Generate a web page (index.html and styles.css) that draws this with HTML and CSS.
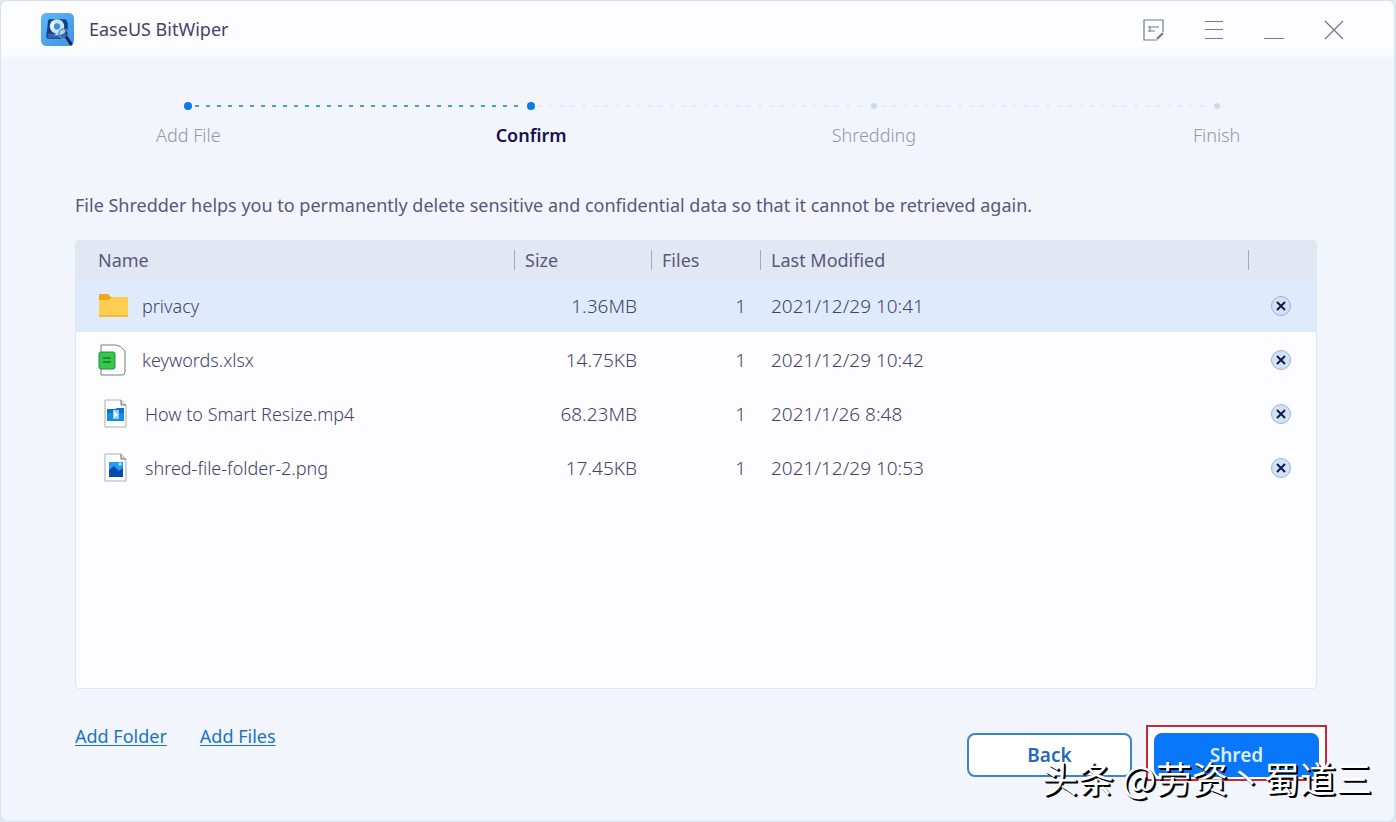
FILE: index.html
```html
<!DOCTYPE html>
<html lang="en">
<head>
<meta charset="UTF-8" />
<meta name="viewport" content="width=device-width, initial-scale=1" />
<title>EaseUS BitWiper</title>
<link rel="stylesheet" href="styles.css">
</head>
<body>
  <div class="window">
    <header class="titlebar">
      <svg class="logo" viewBox="0 0 32 32" aria-hidden="true">
        <defs>
          <linearGradient id="logo-bg" x1="0" y1="0" x2="1" y2="1">
            <stop offset="0" stop-color="#5db9f5" />
            <stop offset="1" stop-color="#3d92ea" />
          </linearGradient>
        </defs>
        <rect width="32" height="32" rx="5" fill="url(#logo-bg)" />
        <path d="M8 6h16l2 4v13l-2 2H6l-1-2 2-16z" fill="#173f87" />
        <path d="M7 20l17-1 1 5H6z" fill="#3268ae" />
        <circle cx="15.500" cy="13" r="7" fill="#c5e6ff" />
        <path d="M10 16a6 6 0 0 1 2-8l3 5z" fill="#f4fbff" />
        <circle cx="15.500" cy="13" r="3" fill="#3c8fdf" />
        <path d="M13 22c2-4 6-4 8-7l3 3c-3 4-7 3-11 4z" fill="#b5d5ee" />
        <circle cx="22" cy="20" r="4.500" fill="none" stroke="#6593bf" stroke-width="1.500" />
        <path d="M25 24l4 6" stroke="#17214f" stroke-width="3" stroke-linecap="round" />
      </svg>
      <h1 class="app-name">EaseUS BitWiper</h1>
      <div class="window-controls">
        <button type="button" class="control" aria-label="Feedback">
          <svg viewBox="0 0 22 22">
            <path d="M14 21H1V1h19v12" />
            <path d="M14 20l6-6" stroke-width="2.200" />
            <path d="M5 8h2m1 0h8M5 12h2m1 0h4M7 7v6" />
          </svg>
        </button>
        <button type="button" class="control" aria-label="Menu">
          <svg viewBox="0 0 22 22"><path d="M2 2.500h18M2 10.500h18M2 19.500h18" /></svg>
        </button>
        <button type="button" class="control" aria-label="Minimize">
          <svg viewBox="0 0 22 22"><path d="M1 19.500h20" /></svg>
        </button>
        <button type="button" class="control" aria-label="Close">
          <svg viewBox="0 0 22 22"><path d="M2 2l18 18M20 2L2 20" /></svg>
        </button>
      </div>
    </header>

    <nav class="steps" aria-label="Progress">
      <div class="track">
        <span class="dot done"></span>
        <span class="line done"></span>
        <span class="dot done"></span>
        <span class="line"></span>
        <span class="dot"></span>
        <span class="line"></span>
        <span class="dot"></span>
      </div>
      <ol class="step-labels">
        <li>Add File</li>
        <li class="current" aria-current="step">Confirm</li>
        <li>Shredding</li>
        <li>Finish</li>
      </ol>
    </nav>

    <main class="content">
      <p class="description">File Shredder helps you to permanently delete sensitive and confidential data so that it cannot be retrieved again.</p>

      <div class="file-list">
        <table>
          <colgroup>
            <col class="col-name">
            <col class="col-size">
            <col class="col-files">
            <col class="col-date">
            <col class="col-remove">
          </colgroup>
          <thead>
            <tr>
              <th scope="col"><span class="name">Name</span></th>
              <th scope="col"><span>Size</span></th>
              <th scope="col"><span>Files</span></th>
              <th scope="col"><span>Last Modified</span></th>
              <th scope="col" aria-label="Remove"><span>&nbsp;</span></th>
            </tr>
          </thead>
          <tbody>
            <tr class="selected">
              <td>
                <div class="file">
                  <svg class="icon" viewBox="0 0 32 32" aria-hidden="true">
                    <path d="M1 5q0-1 1-1h8l3 3h16q1 0 1 1v4H1z" fill="#eda918" />
                    <path d="M1 10h10l3-3h15q1 0 1 1v18q0 1-1 1H2q-1 0-1-1z" fill="#ffcd51" />
                    <path d="M1 25h29v1q0 1-1 1H2q-1 0-1-1z" fill="#f4b936" />
                  </svg>
                  privacy
                </div>
              </td>
              <td class="num">1.36MB</td>
              <td class="num">1</td>
              <td class="date">2021/12/29 10:41</td>
              <td><button type="button" class="remove" aria-label="Remove privacy"><svg viewBox="0 0 18 18"><path d="M5 5l8 8M13 5l-8 8" /></svg></button></td>
            </tr>
            <tr class="tall">
              <td>
                <div class="file">
                  <svg class="icon" viewBox="0 0 32 32" aria-hidden="true">
                    <path d="M3 1h15q4 0 9 6v21q0 3-3 3H3z" fill="#fff" stroke="#777b8d" />
                    <rect x="1" y="8" width="16" height="17" rx="2" fill="#35c64b" stroke="#1c9430" />
                    <path d="M5 14h8M5 18h8" stroke="#147e2a" stroke-width="1.500" />
                  </svg>
                  keywords.xlsx
                </div>
              </td>
              <td class="num">14.75KB</td>
              <td class="num">1</td>
              <td class="date">2021/12/29 10:42</td>
              <td><button type="button" class="remove" aria-label="Remove keywords.xlsx"><svg viewBox="0 0 18 18"><path d="M5 5l8 8M13 5l-8 8" /></svg></button></td>
            </tr>
            <tr>
              <td>
                <div class="file media">
                  <svg class="icon" viewBox="0 0 32 32" aria-hidden="true">
                    <path d="M7 2h16l5 5v22H7z" fill="#fff" stroke="#a6adb9" />
                    <path d="M23 2v5h5" fill="#dce0e7" stroke="#686e7c" />
                    <path d="M9 11h8l2-1h7v13H9z" fill="#0b74d3" />
                    <path d="M9 15h17v8H9z" fill="#168ce9" />
                    <path d="M15 12h6v9h-6z" fill="#8dd2ff" />
                    <path d="M16 13l4 4-4 3z" fill="#fff" />
                  </svg>
                  How to Smart Resize.mp4
                </div>
              </td>
              <td class="num">68.23MB</td>
              <td class="num">1</td>
              <td class="date">2021/1/26 8:48</td>
              <td><button type="button" class="remove" aria-label="Remove How to Smart Resize.mp4"><svg viewBox="0 0 18 18"><path d="M5 5l8 8M13 5l-8 8" /></svg></button></td>
            </tr>
            <tr class="tall">
              <td>
                <div class="file media">
                  <svg class="icon" viewBox="0 0 32 32" aria-hidden="true">
                    <path d="M7 2h16l5 5v22H7z" fill="#fff" stroke="#a6adb9" />
                    <path d="M23 2v5h5" fill="#dce0e7" stroke="#686e7c" />
                    <path d="M11 10h14v15H11z" fill="#269cf0" />
                    <path d="M11 18l5-4 5 5 4-3v9H11z" fill="#064baf" />
                    <circle cx="22" cy="12" r="1.500" fill="#c6eaff" />
                  </svg>
                  shred-file-folder-2.png
                </div>
              </td>
              <td class="num">17.45KB</td>
              <td class="num">1</td>
              <td class="date">2021/12/29 10:53</td>
              <td><button type="button" class="remove" aria-label="Remove shred-file-folder-2.png"><svg viewBox="0 0 18 18"><path d="M5 5l8 8M13 5l-8 8" /></svg></button></td>
            </tr>
          </tbody>
        </table>
      </div>
    </main>

    <footer class="footer">
      <div class="links">
        <a href="#">Add Folder</a>
        <a href="#">Add Files</a>
      </div>
      <div class="actions">
        <button type="button" class="btn back">Back</button>
        <div class="highlight">
          <button type="button" class="btn shred">Shred</button>
        </div>
      </div>
    </footer>
    <div class="watermark" lang="zh-CN">头条 @劳资丶蜀道三</div>
  </div>
</body>
</html>
```
FILE: styles.css
```css
* {
  box-sizing: border-box;
}

body {
  margin: 0;
  background: #dfe9ed;
  font-family: "Noto Sans", "Noto Sans CJK SC", sans-serif;
  font-size: 18px;
  font-weight: 300;
  color: #454269;
}

button {
  font-family: inherit;
  cursor: pointer;
}

.window {
  position: relative;
  display: flex;
  flex-direction: column;
  min-height: 100vh;
  background: #f2f5fc;
  border: 1px solid #d5e4ed;
  border-right-width: 2px;
  border-radius: 8px;
  overflow: hidden;
}

/* Title bar */
.titlebar {
  display: flex;
  align-items: center;
  height: 56px;
  padding: 0 49px 0 40px;
  background: linear-gradient(#fdfdff 80%, #f8faff);
}

.logo {
  width: 33px;
  height: 33px;
}

.app-name {
  margin: 0 0 0 15px;
  font-size: 18px;
  font-weight: 400;
}

.window-controls {
  display: flex;
  gap: 38px;
  margin-left: auto;
  padding-top: 2px;
}

.control {
  width: 22px;
  height: 22px;
  padding: 0;
  border: none;
  background: none;
}

.control svg {
  display: block;
  fill: none;
  stroke: #73778b;
  stroke-width: 1.2;
}

/* Progress steps */
.steps {
  padding: 45px 6px 0 16px;
}

.track {
  display: flex;
  align-items: center;
  height: 8px;
  padding: 0 calc(12.5% - 4px);
}

.dot {
  width: 8px;
  height: 8px;
  border: 1px solid #f2f5fc;
  border-radius: 50%;
  background: #c7dbe7;
}

.dot.done {
  border: none;
  background: #087be8;
}

.line {
  flex: 1;
  height: 2px;
  margin: 0 3px;
  background: repeating-linear-gradient(90deg, #e4ebf4 0 4px, transparent 4px 11px);
}

.line.done {
  background: repeating-linear-gradient(90deg, #459fd2 0 4px, transparent 4px 11px);
}

.step-labels {
  display: grid;
  grid-template-columns: repeat(4, 1fr);
  margin: 13px 0 0;
  padding: 0;
  list-style: none;
  line-height: 24px;
  text-align: center;
  color: #9297ae;
}

.step-labels .current {
  font-weight: 600;
  color: #171052;
}

/* File list */
.content {
  display: flex;
  flex: 1;
  flex-direction: column;
  padding: 46px 77px 0 74px;
}

.description {
  margin: 0 0 23px;
  font-weight: 400;
  line-height: 24px;
  color: #5a577c;
}

.file-list {
  flex: 1;
  border: 1px solid #dce6ef;
  border-radius: 4px;
  background: #fdfdff;
  overflow: hidden;
}

table {
  width: 100%;
  table-layout: fixed;
  border-collapse: collapse;
}

.col-size {
  width: 137px;
}

.col-files {
  width: 109px;
}

.col-date {
  width: 488px;
}

.col-remove {
  width: 68px;
}

th {
  height: 39px;
  padding: 0 0 2px;
  background: #e2e8f3;
  font-weight: 400;
  text-align: left;
  color: #5a577c;
}

th span {
  display: block;
  padding-left: 10px;
  border-left: 1px solid #a4abc0;
  line-height: 20px;
}

th .name {
  padding-left: 22px;
  border-left: none;
}

td {
  height: 52px;
  padding: 0 0 0 11px;
}

.tall td {
  height: 56px;
}

.selected {
  background: #dfebfc;
}

td:first-child {
  padding-left: 22px;
}

.num,
.date {
  font-size: 19px;
}

td.num {
  padding-right: 14px;
  text-align: right;
}

.file {
  display: flex;
  align-items: center;
  gap: 12px;
}

.file.media {
  gap: 15px;
}

.icon {
  width: 32px;
  height: 32px;
}

td:last-child {
  padding-left: 23px;
}

.remove {
  display: block;
  width: 20px;
  height: 20px;
  padding: 0;
  border: 1px solid #9bb4d2;
  border-radius: 50%;
  background: #d0e2f7;
}

.remove svg {
  display: block;
  fill: none;
  stroke: #181944;
  stroke-width: 2;
}

/* Footer */
.footer {
  display: flex;
  justify-content: space-between;
  align-items: flex-start;
  min-height: 132px;
  padding: 36px 67px 0 74px;
}

.links {
  display: flex;
  gap: 33px;
}

.links a {
  color: #1673c9;
  font-weight: 400;
  line-height: 22px;
  text-underline-offset: 2px;
}

.actions {
  display: flex;
  align-items: flex-end;
  gap: 14px;
}

.btn {
  width: 165px;
  height: 44px;
  border: 2px solid #3984ca;
  border-radius: 8px;
  font-size: 19px;
  font-weight: 600;
}

.back {
  margin-bottom: 4px;
  background: #fff;
  color: #2868bc;
}

.highlight {
  padding: 6px 6px 2px;
  border: 2px solid #c92839;
  background: #fff;
}

.shred {
  display: block;
  border-color: #0877fa;
  background: #0877fa;
  color: #d9edff;
}

.watermark {
  position: absolute;
  right: 22px;
  bottom: 20px;
  color: #fff;
  font-family: "Noto Sans CJK SC", sans-serif;
  font-size: 36px;
  font-weight: 400;
  line-height: 48px;
  text-shadow: 1px 1px 0 #000, 2px 2px 0 #000;
  pointer-events: none;
}
```
